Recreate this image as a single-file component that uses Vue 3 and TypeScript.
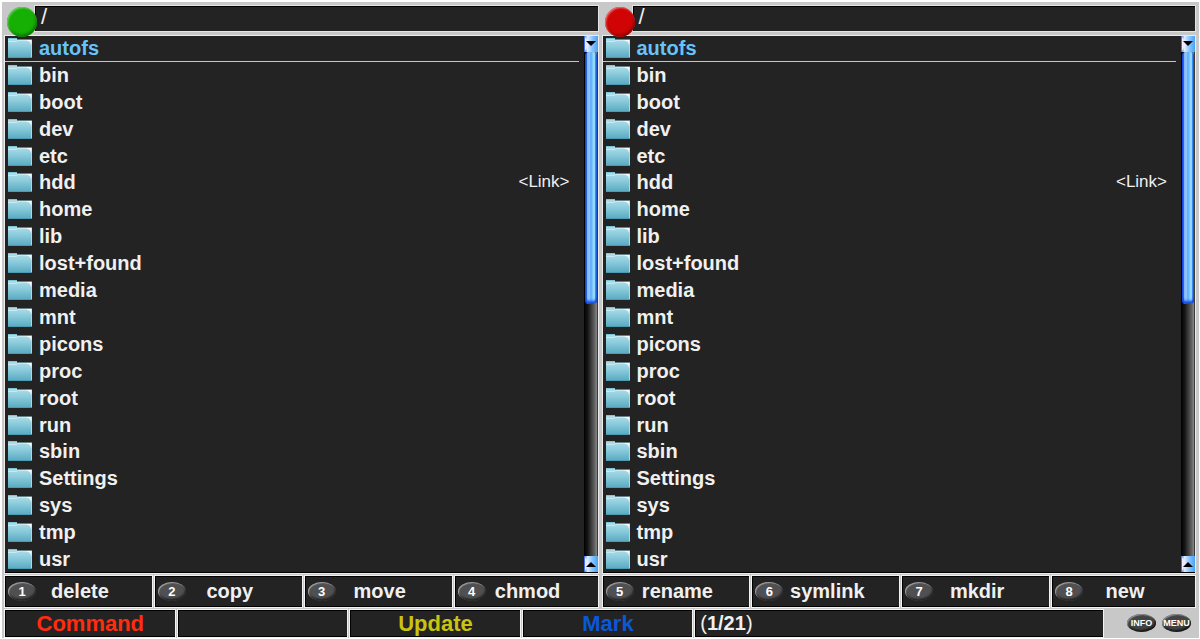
<script setup lang="ts">
import { ref } from 'vue'

interface Entry {
  name: string
  link?: boolean
}

const entries: Entry[] = [
  { name: 'autofs' },
  { name: 'bin' },
  { name: 'boot' },
  { name: 'dev' },
  { name: 'etc' },
  { name: 'hdd', link: true },
  { name: 'home' },
  { name: 'lib' },
  { name: 'lost+found' },
  { name: 'media' },
  { name: 'mnt' },
  { name: 'picons' },
  { name: 'proc' },
  { name: 'root' },
  { name: 'run' },
  { name: 'sbin' },
  { name: 'Settings' },
  { name: 'sys' },
  { name: 'tmp' },
  { name: 'usr' },
]

const panes = [
  { id: 'left', color: 'green', path: '/', selected: ref(0) },
  { id: 'right', color: 'red', path: '/', selected: ref(0) },
]

const actionGroups = [
  ['delete', 'copy', 'move', 'chmod'],
  ['rename', 'symlink', 'mkdir', 'new'],
]
</script>

<template>
  <svg class="defs" aria-hidden="true">
    <defs>
      <linearGradient id="folder-fill" x1="0" y1="0" x2="0" y2="1">
        <stop offset="0" stop-color="#b4e0ea" />
        <stop offset="0.45" stop-color="#8acbdc" />
        <stop offset="1" stop-color="#58a9c0" />
      </linearGradient>
      <linearGradient id="arrow-fill" x1="0" y1="0" x2="1" y2="0">
        <stop offset="0" stop-color="#2a62e8" />
        <stop offset="0.25" stop-color="#dcecff" />
        <stop offset="0.6" stop-color="#86c4ff" />
        <stop offset="1" stop-color="#4aa0f4" />
      </linearGradient>
    </defs>
  </svg>
  <main class="commander">
    <div class="panes">
      <section v-for="pane in panes" :key="pane.id" class="pane">
        <div class="path">{{ pane.path }}</div>
        <span class="ball" :class="pane.color"></span>
        <div class="listing">
          <ul>
            <li v-for="(entry, i) in entries" :key="entry.name">
              <button
                type="button"
                class="row"
                :class="{ selected: pane.selected.value === i }"
                @click="pane.selected.value = i"
              >
                <svg class="folder" viewBox="0 0 24 20" aria-hidden="true">
                  <path d="M0 0H9V1.5H24V20H0Z" fill="url(#folder-fill)" />
                  <path d="M0 0.5H9" fill="none" stroke="#7cc4d6" stroke-width="1" />
                  <path d="M0 3.5H8L10 2.5H20" fill="none" stroke="#c8eaf2" stroke-width="1" />
                  <path d="M18 2H23.5V8L22 4Z" fill="#f4fcff" />
                  <path d="M23.5 7V20" stroke="#a4dae6" stroke-width="1" />
                  <path d="M0 19.5H24" stroke="#4b9bb3" stroke-width="1" />
                </svg>
                <span class="name">{{ entry.name }}</span>
                <span v-if="entry.link" class="link">&lt;Link&gt;</span>
              </button>
            </li>
          </ul>
          <div class="scrollbar">
            <svg class="arrow" viewBox="0 0 14 16" aria-hidden="true">
              <rect width="14" height="16" fill="url(#arrow-fill)" />
              <path d="M1 1Q8 7 1 15Z" fill="#f0e8ff" />
              <path d="M2 5H12L7 10Z" fill="#000" />
            </svg>
            <div class="track"><div class="thumb"></div></div>
            <svg class="arrow" viewBox="0 0 14 16" aria-hidden="true">
              <rect width="14" height="16" fill="url(#arrow-fill)" />
              <path d="M1 1Q8 7 1 15Z" fill="#f0e8ff" />
              <path d="M2 11H12L7 6Z" fill="#000" />
            </svg>
          </div>
        </div>
      </section>
    </div>
    <div class="actions">
      <div v-for="(group, g) in actionGroups" :key="g" class="group">
        <button v-for="(label, i) in group" :key="label" type="button" class="cell action">
          <span class="key">{{ g * 4 + i + 1 }}</span>
          <span>{{ label }}</span>
        </button>
      </div>
    </div>
    <footer class="status">
      <button type="button" class="cell command">Command</button>
      <div class="cell"></div>
      <button type="button" class="cell update">Update</button>
      <button type="button" class="cell mark">Mark</button>
      <div class="cell counter"><span class="paren">(</span>1/21<span class="paren">)</span></div>
      <div class="hints">
        <button type="button" class="oval">INFO</button>
        <button type="button" class="oval">MENU</button>
      </div>
    </footer>
  </main>
</template>

<style>
body {
  margin: 0;
  background: #fff;
}
</style>

<style scoped>
* {
  box-sizing: border-box;
}
.defs {
  position: absolute;
  width: 0;
  height: 0;
}
button {
  margin: 0;
  border: 0;
  padding: 0;
  font: inherit;
  color: inherit;
  cursor: pointer;
}
.commander {
  margin: 2px 1px 1px 2px;
  padding: 4px 4px 1px 3px;
  background: #c8c8c8;
  color: #f0f0f0;
  font: bold 20px/26px "Liberation Sans", Arial, sans-serif;
}
.panes,
.actions {
  display: grid;
  grid-template-columns: 1fr 1fr;
  gap: 5px;
}
.pane {
  position: relative;
  min-width: 0;
}
.path {
  height: 25px;
  margin-left: 30px;
  padding-left: 5px;
  background: #232323;
  border-top: 1px solid #000;
  border-left: 1px solid #000;
  box-shadow: 0 0 0 1px #e4e4e4;
  font-size: 22px;
  font-weight: normal;
  line-height: 20px;
}
.ball {
  position: absolute;
  top: 1px;
  left: 2px;
  width: 30px;
  height: 30px;
  border-radius: 50%;
}
.green {
  background: #16b004;
  box-shadow: inset 1px 1px 2px #7ad070, inset -1px -2px 3px #0a7002;
}
.red {
  background: #d00404;
  box-shadow: inset 1px 1px 2px #f08080, inset -1px -2px 3px #8a0000;
}
.listing {
  display: flex;
  height: 537px;
  margin-top: 5px;
  overflow: hidden;
  background: #232323;
  border-bottom: 1px solid #000;
  box-shadow: 0 0 0 1px #ececec;
}
ul {
  display: grid;
  grid-auto-rows: 1fr;
  flex: 1;
  min-width: 0;
  height: 538px;
  margin: 0;
  padding: 0 5px 0 0;
  list-style: none;
}
li {
  min-height: 0;
}
.row {
  display: flex;
  align-items: flex-start;
  width: 100%;
  height: 26px;
  padding: 0 9px 0 3px;
  background: transparent;
  text-align: left;
  line-height: 24px;
}
.row.selected {
  color: #66c4fa;
  background: linear-gradient(#c4c8c4, #c4c8c4) 0 25px / 100% 1px no-repeat;
}
.folder {
  width: 24px;
  height: 20px;
  margin: 2px 7px 0 0;
}
.name {
  flex: 1;
}
.link {
  font-size: 17px;
  font-weight: normal;
}
.scrollbar {
  display: flex;
  flex-direction: column;
  width: 14px;
}
.arrow {
  width: 14px;
  height: 16px;
}
.track {
  flex: 1;
  background: linear-gradient(90deg, #000 0, #141414 25%, #686868 80%, #8c8c8c 88%, #181818 100%);
}
.thumb {
  height: 50%;
  margin: 0 1px;
  border-radius: 4px;
  background: linear-gradient(90deg, #0b3cdc 0, #2d6cf0 14%, #88bcff 20%, #8fc4ff 40%, #58a8ff 48%, #a4e8ff 78%, #3c8ef4 88%, #1550c4 100%);
  box-shadow: inset 0 -3px 3px #1048e0;
}
.actions {
  margin-top: 3px;
}
.group {
  display: grid;
  grid-template-columns: 147fr 147fr 147fr 143fr;
  gap: 3px;
}
.cell {
  background: #232323;
  border: solid #000;
  border-width: 1px 0 1px 1px;
  box-shadow: 0 0 0 1px #f2f2f2;
}
.action {
  position: relative;
  height: 31px;
  padding: 0 0 2px 2px;
  text-align: center;
}
.key {
  position: absolute;
  top: 5px;
  left: 2px;
  width: 28px;
  height: 19px;
  border-radius: 50%;
  background: #505052;
  box-shadow: inset 1px 1px 1px #a0a0a0, inset -1px -2px 2px #242424;
  color: #fff;
  font-size: 13px;
  line-height: 20px;
}
.status {
  display: grid;
  grid-template-columns: 170fr 170fr 170fr 170fr 409fr 89fr;
  gap: 3px;
  margin-top: 3px;
  font-size: 22px;
}
.status .cell {
  height: 27px;
}
.command {
  color: #ff2c10;
}
.update {
  color: #c8c410;
}
.mark {
  color: #0a58d8;
}
.status .counter {
  padding-left: 4px;
  font-size: 20px;
  line-height: 25px;
}
.paren {
  font-weight: normal;
}
.hints {
  display: flex;
  align-items: center;
  justify-content: flex-end;
  gap: 6px;
  padding: 0 4px 2px 0;
}
.oval {
  width: 29px;
  height: 18px;
  border-radius: 50%;
  background: #444;
  box-shadow: inset 1px 1px 1px #909090, inset -1px -2px 2px #181818;
  color: #fff;
  font-size: 9px;
  line-height: 18px;
  white-space: nowrap;
}
</style>
